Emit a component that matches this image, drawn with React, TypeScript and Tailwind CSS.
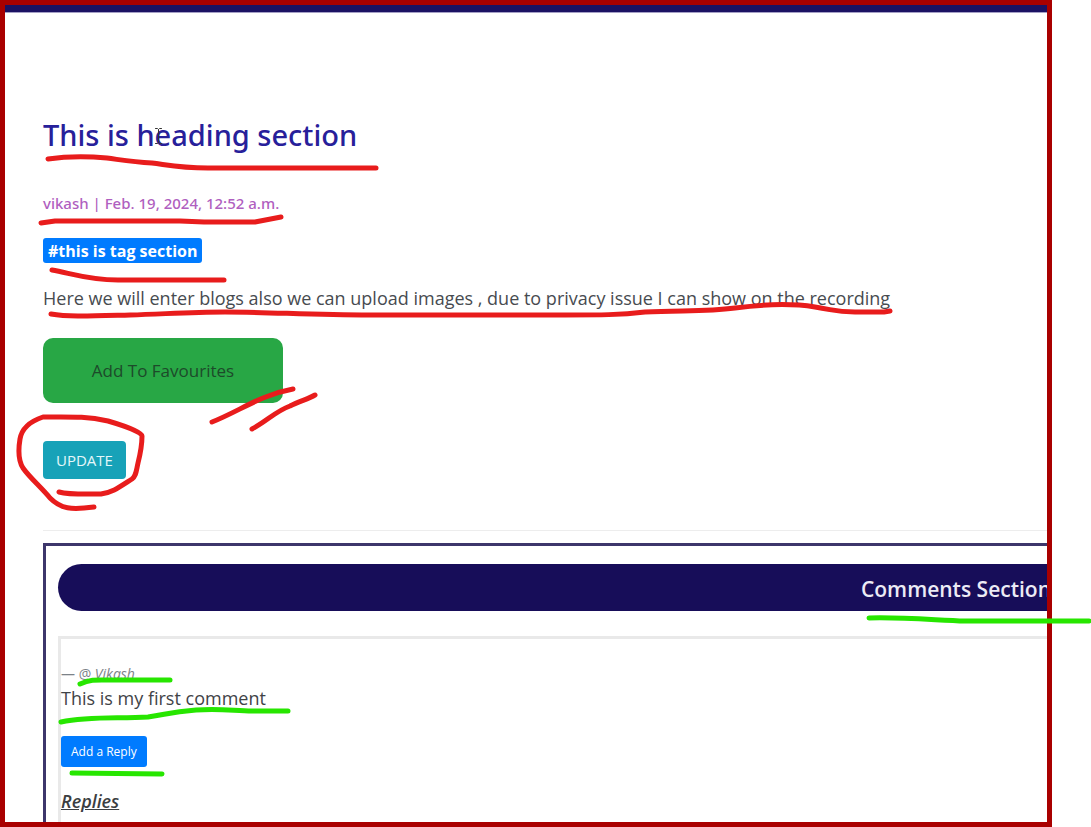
const redMarks = [
  'M48 159 C62 157 84 156 107 158 C122 160 132 162 152 163 C168 165 180 168 208 168 L376 168',
  'M41 223 L55 221 L180 221 L204 222 L255 222 L281 217',
  'M52 270 C70 273 88 280 118 280 L224 280',
  'M51 314 C68 317 90 316 130 315 C165 314 190 312 225 312 C270 312 310 315 370 315 L565 315 C600 315 620 315 645 312 C680 310 705 312 735 308 C765 304 790 303 815 307 C835 310 835 312 855 312 L884 312 L890 311',
  'M212 422 C240 411 260 395 293 389',
  'M252 429 C267 421 276 411 290 406 C300 401 308 399 315 395',
  'M59 492 C70 495 90 494 101 494 C113 492 118 488 132 479 C136 476 136 472 138 463 C141 451 142 443 142 436 C142 432 125 426 108 421 C85 416 70 417 43 417 C31 421 22 427 20 439 C18 451 18 460 23 468 C30 478 41 487 50 498 C61 509 71 510 94 507',
];

const greenMarks = [
  'M869 618 C900 617 935 620 965 621 L1089 621',
  'M80 684 C91 679 98 680 110 680 L170 680',
  'M61 722 C90 716 120 719 148 717 C168 714 170 712 196 710 C220 708 235 711 252 711 L288 711',
  'M72 773 L162 774',
];

function Annotations() {
  return (
    <svg
      className="pointer-events-none absolute top-0 left-0"
      width="1091"
      height="827"
      viewBox="0 0 1091 827"
      fill="none"
      strokeWidth="5"
      strokeLinecap="round"
      strokeLinejoin="round"
      aria-hidden="true"
    >
      <g stroke="#e81c1c">
        {redMarks.map((d) => (
          <path key={d} d={d} />
        ))}
      </g>
      <g stroke="#27e600">
        {greenMarks.map((d) => (
          <path key={d} d={d} />
        ))}
      </g>
      <path
        d="M155.500 128.500h2l1 1l1-1h2M158.500 129.500v13M155.500 143.500h2l1-1l1 1h2"
        stroke="#333"
        strokeWidth="1"
      />
    </svg>
  );
}

function Comments() {
  return (
    <section className="mt-3 grow border-t-3 border-l-3 border-[#3d366b] pt-[18px] pl-3">
      <h2 className="flex h-[47px] items-center justify-end rounded-l-full bg-[#170d59] text-[21px] font-semibold whitespace-nowrap text-[#ecebf5]">
        <span className="-mr-1 pt-1">Comments Section</span>
      </h2>
      <article className="mt-[25px] h-full border-t-3 border-l-3 border-[#e9e9e9] pt-[25px]">
        <p className="text-sm leading-5 text-[#7c8288]">
          — @ <cite>Vikash</cite>
        </p>
        <p className="text-lg leading-7 text-[#3f4347]">This is my first comment</p>
        <button type="button" className="mt-6 block h-[31px] rounded-[3px] bg-[#007bff] px-[10px] text-xs text-white">
          Add a Reply
        </button>
        <h3 className="mt-5 text-lg leading-7 font-semibold text-[#3b3e42] italic underline">Replies</h3>
      </article>
    </section>
  );
}

export default function App() {
  return (
    <div className="relative h-screen overflow-hidden bg-white pr-[39px] font-['Open_Sans','Noto_Sans',sans-serif]">
      <div className="flex h-full flex-col overflow-hidden border-[5px] border-[#a90000]">
        <header className="h-2 shrink-0 border-b border-[#a5a0c6] bg-[#1b1263]" />
        <main className="flex min-h-0 grow flex-col pt-[104px] pl-[38px]">
          <div className="font-['Noto_Sans',sans-serif] font-medium">
            <h1 className="text-[29px] leading-9 text-[#27209a]">This is heading section</h1>
            <p className="mt-[38px] text-[15px] leading-6 text-[#b05fc0]">vikash | Feb. 19, 2024, 12:52 a.m.</p>
          </div>
          <div className="mt-[23px] flex">
            <span className="flex h-[25px] items-center rounded-[3px] bg-[#007bff] px-[5px] text-base font-bold text-white">
              #this is tag section
            </span>
          </div>
          <p className="mt-[21px] text-lg leading-7 text-[#474b50]">
            Here we will enter blogs also we can upload images , due to privacy issue I can show on the recording
          </p>
          <div className="mt-[26px] flex flex-col items-start gap-[38px]">
            <button type="button" className="h-[65px] w-60 rounded-[10px] bg-[#28a745] text-[17px] text-[#1d4a2a]">
              Add To Favourites
            </button>
            <button type="button" className="h-[38px] rounded bg-[#17a2b8] px-[13px] text-[15px] text-[#e4f7fa]">
              UPDATE
            </button>
          </div>
          <hr className="mt-[51px] border-[#ededed]" />
          <Comments />
        </main>
      </div>
      <Annotations />
    </div>
  );
}
